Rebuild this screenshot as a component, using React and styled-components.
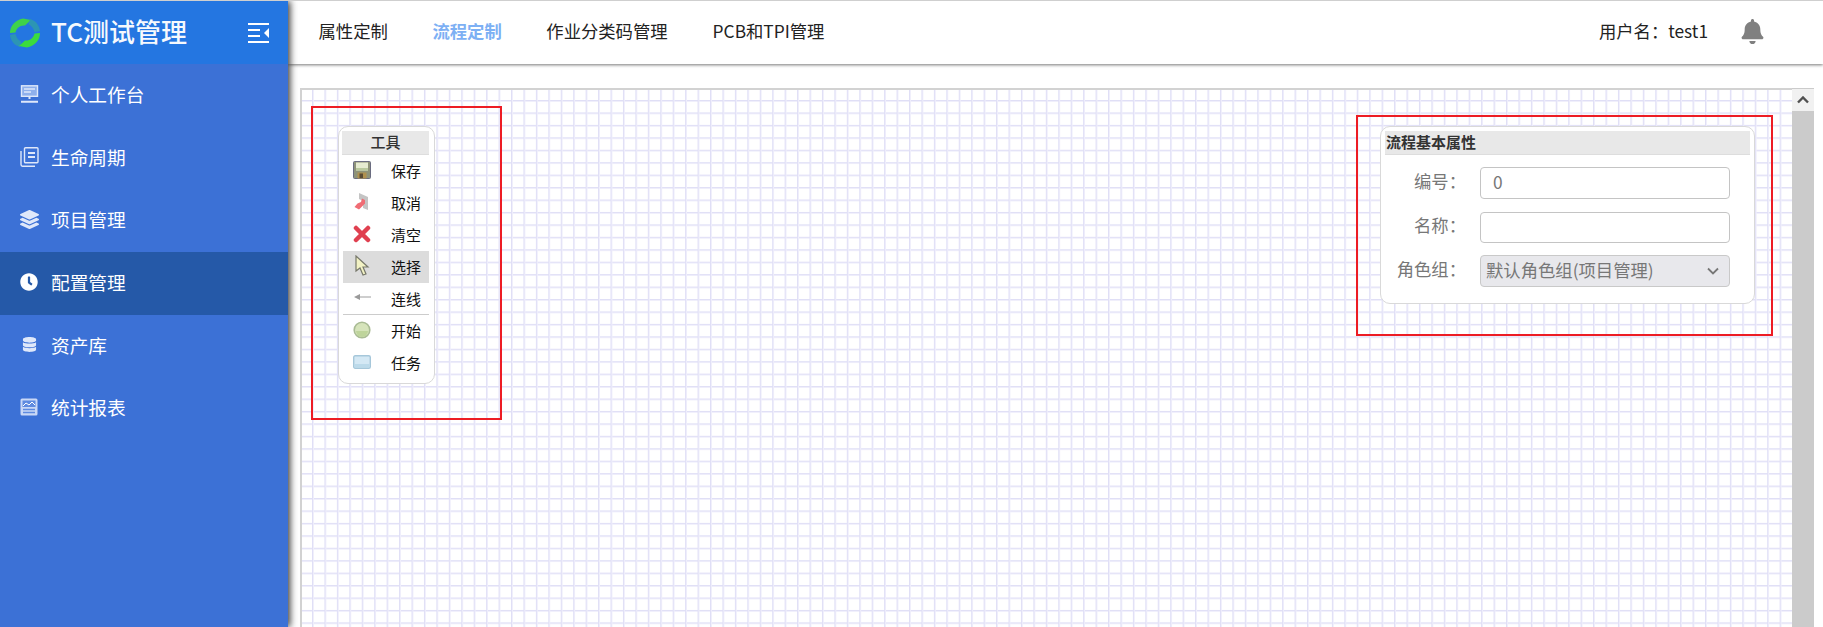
import React from "react";
import styled, { createGlobalStyle } from "styled-components";
import { FaBell, FaClock, FaDatabase, FaLayerGroup } from "react-icons/fa";

const Global = createGlobalStyle`
  html, body { margin: 0; padding: 0; background: #fff; }
  body { font-family: "Noto Sans CJK SC", "Noto Sans", sans-serif; }
  * { box-sizing: border-box; }
`;

const Page = styled.div`
  width: 1823px; height: 627px; display: flex; overflow: hidden;
  border-top: 1px solid #cfcfcf; background: #fff;
`;
const Sidebar = styled.aside`
  width: 288px; flex: none; background: #3c71d6; position: relative; z-index: 3;
  box-shadow: 2px 0 7px #333;
`;
const Brand = styled.div`
  height: 63px; background: #2476e1; display: flex; align-items: center;
  padding: 0 18px 0 9px;
`;
const BrandText = styled.div`
  flex: 1; margin-left: 10px; color: #fff; font-size: 26px; font-weight: 500;
  line-height: 30px; padding-bottom: 4px; opacity: .96;
`;
const MenuItem = styled.div`
  height: 62.7px; display: flex; align-items: center; padding: 0 0 3px 19px;
  color: #fff; font-size: 18.7px; line-height: 26px;
  background: ${(p) => (p.$active ? "#2559a8" : "transparent")};
`;
const MenuIcon = styled.span`
  width: 20px; height: 20px; margin-right: 12px; display: flex;
  align-items: center; justify-content: center; color: #dfe8fa;
`;
const Main = styled.div`
  flex: 1; min-width: 0; display: flex; flex-direction: column;
`;
const Topbar = styled.header`
  height: 63px; flex: none; display: flex; align-items: center; background: #fff;
  padding: 0 0 3px 30.500px; position: relative; z-index: 2; box-shadow: 0 1px 3px #777;
`;
const Tab = styled.span`
  margin-right: ${(p) => p.$gap}px; font-size: 17.33px; line-height: 24px;
  color: ${(p) => (p.$active ? "#7db0f4" : "#222")};
  font-weight: ${(p) => (p.$active ? 700 : 400)};
`;
const User = styled.span`
  margin-left: auto; font-size: 17.33px; line-height: 24px; color: #222;
`;
const Bell = styled.span`
  display: flex; margin: 0 58px 0 32px; color: #808080;
`;
const Content = styled.div`
  flex: 1; min-height: 0; display: flex; padding: 24px 9px 0 12px;
`;
const Canvas = styled.div`
  flex: 1; position: relative; overflow: hidden;
  border-left: 2px solid #d2d2d2; border-top: 2px solid #d2d2d2;
  background-color: #fff;
  background-image:
    linear-gradient(to right, #e0dff6 1px, #efeefb 1px, #efeefb 2px, transparent 2px),
    linear-gradient(to bottom, #e0dff6 1px, #efeefb 1px, #efeefb 2px, transparent 2px);
  background-size: 12.45px 12.45px;
  background-position: 10px 10px;
`;
const Scrollbar = styled.div`
  width: 22px; flex: none; display: flex; flex-direction: column; background: #cbcbcb;
`;
const ScrollButton = styled.div`
  height: 22px; background: #f1f1f1; display: flex; align-items: center;
  justify-content: center; margin-top: 1px;
`;
const Panel = styled.div`
  position: absolute; left: ${(p) => p.$left}px; top: ${(p) => p.$top}px;
  width: ${(p) => p.$width}px; height: ${(p) => p.$height}px;
  background: #fff; border: 1px solid #d9d9d9; border-radius: 10px;
`;
const ToolHead = styled.div`
  margin: 4px 5px 0 3px; height: 24px; background: #e8e8e8;
  border-bottom: 1px solid #ddd; text-align: center;
  font-size: 15px; line-height: 22px; color: #333; font-weight: 500;
`;
const Tool = styled.div`
  height: 32px; margin: 0 5px 0 4px;
  display: grid; grid-template-columns: 37px 1fr; align-items: center;
  font-size: 15px; line-height: 20px; color: #111;
  background: ${(p) => (p.$active ? "#dcdcdc" : "transparent")};
  border-bottom: ${(p) => (p.$rule ? "1px solid #ccc" : "none")};
  span:last-child { padding-left: 11px; }
`;
const ToolIcon = styled.span`
  display: flex; justify-content: center; margin-top: -3px;
`;
const PropHead = styled.div`
  margin: 4px 4px 0 4px; height: 24px; background: #e8e8e8;
  border-bottom: 1px solid #ddd; padding-left: 1px;
  font-size: 15px; font-weight: 700; line-height: 21px; color: #333;
`;
const Field = styled.div`
  display: grid; grid-template-columns: 77px 250px; column-gap: 22px;
  align-items: center; margin-top: ${(p) => p.$top}px; color: #777;
  font-size: 17.33px; line-height: 24px;
`;
const Label = styled.label`
  text-align: right; margin-right: -8px; padding-bottom: 4px;
`;
const TextInput = styled.input`
  height: 31.500px; width: 250px; border: 1px solid #c4c4c4; border-radius: 4px;
  padding: 0 12px 3px; background: #fff; color: #777; outline: none;
  font: 17.33px "Noto Sans CJK SC", sans-serif;
`;
const SelectBox = styled.div`
  height: 32px; width: 250px; border: 1px solid #c9c9c9; border-radius: 4px;
  padding: 0 5px 3px; background: #e8e8ec; color: #777; position: relative;
  display: flex; align-items: center; white-space: nowrap;
  svg { position: absolute; right: 10px; top: 11px; }
`;
const Note = styled.div`
  position: absolute; border: 2px solid #ed1c24; pointer-events: none;
  left: ${(p) => p.$left}px; top: ${(p) => p.$top}px;
  width: ${(p) => p.$width}px; height: ${(p) => p.$height}px;
`;

const Logo = () => (
  <svg width="32" height="32" viewBox="0 0 32 32">
    <path d="M1 16C1 9 6 3 14 1.500L22 3 16 8.500C11 8 7.500 11 6.500 15.500Z" fill="#3fd24a" />
    <path d="M1 18L6.500 17C7.500 21 9.500 23.500 12.500 24.800L11 30C5.500 28.500 1.800 24 1 18Z" fill="#2c95b4" />
    <path d="M31 16C31 23 26 29 18 30.500L10 29 16 23.500C21 24 24.500 21 25.500 16.500Z" fill="#3bdc3d" />
    <path d="M31 14L25.500 15C24.500 11 22.500 8.500 19.500 7.200L21 2C26.500 3.500 30.200 8 31 14Z" fill="#2c95b4" />
  </svg>
);

const Collapse = () => (
  <svg width="22" height="20" viewBox="0 0 22 20" fill="#fff">
    <rect x="0" y="0" width="21" height="2" />
    <rect x="0" y="18" width="21" height="2" />
    <rect x="0" y="6" width="12" height="2" />
    <rect x="0" y="12" width="12" height="2" />
    <path d="M21 5v10l-5-5z" />
  </svg>
);

const Monitor = () => (
  <svg width="19" height="18" viewBox="0 0 19 18" fill="none" stroke="#dfe8fa" strokeWidth="1.400">
    <rect x="1.500" y=".8" width="16" height="10.500" fill="#8fb0ec" />
    <path d="M4 4h11M4 7h7" />
    <path d="M9.500 11v3M1 16.800h17" strokeWidth="2" />
  </svg>
);
const Book = () => (
  <svg width="19" height="20" viewBox="0 0 19 20" fill="none" stroke="#dfe8fa" strokeWidth="1.400">
    <rect x="4.500" y=".8" width="13.500" height="15" rx="1" />
    <path d="M1 4v13.500c0 1 .6 1.700 1.500 1.700H15" />
    <path d="M8 6h7M8 10h7" strokeWidth="1.800" />
  </svg>
);
const Report = () => (
  <svg width="18" height="18" viewBox="0 0 18 18">
    <rect x=".5" y=".5" width="17" height="17" rx="1.500" fill="#c9d8f6" />
    <rect x="2.500" y="2.500" width="13" height="6.500" fill="#5f8be0" />
    <path d="M3 8l3-3 3 2 3-3 3 3" stroke="#fff" strokeWidth="1" fill="none" />
    <path d="M3 11.500h12M3 14.500h12" stroke="#5f8be0" strokeWidth="1.300" />
  </svg>
);

const Floppy = () => (
  <svg width="18" height="18" viewBox="0 0 18 18">
    <rect x=".5" y=".5" width="17" height="17" rx="1" fill="#8e9379" stroke="#6a6c80" />
    <rect x="3" y="1.500" width="12" height="8" fill="#e6ecd0" />
    <rect x="3" y="7" width="12" height="2.500" fill="#b9c99c" />
    <rect x="4.500" y="11.500" width="9" height="6" fill="#b0914f" />
    <rect x="6.500" y="12.500" width="3.500" height="4.500" fill="#5a4c35" />
  </svg>
);
const Cancel = () => (
  <svg width="18" height="18" viewBox="0 0 18 18">
    <path d="M6 0l9 4v13l-5-2V8L6 6z" fill="#c4c4c4" />
    <path d="M9 5.500l3 1.500v3.500l-3 3-3 3-4.500-2.500 3-3.500 3.500-1.500z" fill="#f06d75" />
  </svg>
);
const Cross = () => (
  <svg width="18" height="18" viewBox="0 0 18 18">
    <path d="M3 3L15 15M15 3L3 15" stroke="#e04050" strokeWidth="4.500" strokeLinecap="round" />
  </svg>
);
const Cursor = () => (
  <svg width="16" height="22" viewBox="0 0 16 22">
    <path d="M2 1v15l4-3 3 7 3-1-3-7h5z" fill="#f2f2c4" stroke="#77786a" strokeWidth="1.200" />
  </svg>
);
const Line = () => (
  <svg width="18" height="10" viewBox="0 0 18 10">
    <path d="M7 5h11" stroke="#b9b9b9" strokeWidth="1.400" />
    <path d="M1 5l6-3v6z" fill="#9a9a9a" />
  </svg>
);
const StartDot = () => (
  <svg width="18" height="18" viewBox="0 0 18 18">
    <circle cx="9" cy="9" r="7.800" fill="#d6e4bb" stroke="#a9bb94" strokeWidth="1.600" />
    <path d="M3 10a6 6 0 0 0 12 0z" fill="#bed49b" />
  </svg>
);
const Task = () => (
  <svg width="18" height="14" viewBox="0 0 18 14">
    <rect x=".7" y=".7" width="16.600" height="12.600" rx="1.500" fill="#d4e8f4" stroke="#a6c7da" strokeWidth="1.400" />
    <rect x="1.500" y="9" width="15" height="3.500" fill="#bcdaea" />
  </svg>
);
const Chevron = ({ color, up, weight = 1.8 }) => (
  <svg width="12" height="8" viewBox="0 0 12 8" fill="none">
    <path d={up ? "M1 6.500l5-5 5 5" : "M1 1.500l5 5 5-5"} stroke={color} strokeWidth={weight} />
  </svg>
);

const menu = [
  ["个人工作台", <Monitor />],
  ["生命周期", <Book />],
  ["项目管理", <FaLayerGroup size={19} />],
  ["配置管理", <FaClock size={18} color="#fff" />, true],
  ["资产库", <FaDatabase size={15} />],
  ["统计报表", <Report />],
];

const tools = [
  ["保存", <Floppy />],
  ["取消", <Cancel />],
  ["清空", <Cross />],
  ["选择", <Cursor />, true],
  ["连线", <Line />, false, true],
  ["开始", <StartDot />],
  ["任务", <Task />],
];

export default function App() {
  return (
    <>
      <Global />
      <Page>
        <Sidebar>
          <Brand>
            <Logo />
            <BrandText>TC测试管理</BrandText>
            <Collapse />
          </Brand>
          {menu.map(([text, icon, active]) => (
            <MenuItem key={text} $active={active}>
              <MenuIcon>{icon}</MenuIcon>
              {text}
            </MenuItem>
          ))}
        </Sidebar>
        <Main>
          <Topbar>
            <Tab $gap={44.6}>属性定制</Tab>
            <Tab $gap={44.6} $active>流程定制</Tab>
            <Tab $gap={45}>作业分类码管理</Tab>
            <Tab $gap={0}>PCB和TPI管理</Tab>
            <User>用户名：test1</User>
            <Bell><FaBell size={25} /></Bell>
          </Topbar>
          <Content>
            <Canvas>
              <Panel $left={36} $top={36} $width={97} $height={258}>
                <ToolHead>工具</ToolHead>
                {tools.map(([text, icon, active, rule]) => (
                  <Tool key={text} $active={active} $rule={rule}>
                    <ToolIcon>{icon}</ToolIcon>
                    <span>{text}</span>
                  </Tool>
                ))}
              </Panel>
              <Panel $left={1078} $top={36} $width={375} $height={178}>
                <PropHead>流程基本属性</PropHead>
                <Field $top={12}>
                  <Label>编号：</Label>
                  <TextInput readOnly value="0" />
                </Field>
                <Field $top={13}>
                  <Label>名称：</Label>
                  <TextInput readOnly value="" />
                </Field>
                <Field $top={12}>
                  <Label>角色组：</Label>
                  <SelectBox>
                    默认角色组(项目管理)
                    <Chevron color="#777" />
                  </SelectBox>
                </Field>
              </Panel>
              <Note $left={9} $top={16} $width={191} $height={314} />
              <Note $left={1054} $top={25} $width={417} $height={221} />
            </Canvas>
            <Scrollbar>
              <ScrollButton><Chevron color="#505050" up weight={2.4} /></ScrollButton>
            </Scrollbar>
          </Content>
        </Main>
      </Page>
    </>
  );
}
